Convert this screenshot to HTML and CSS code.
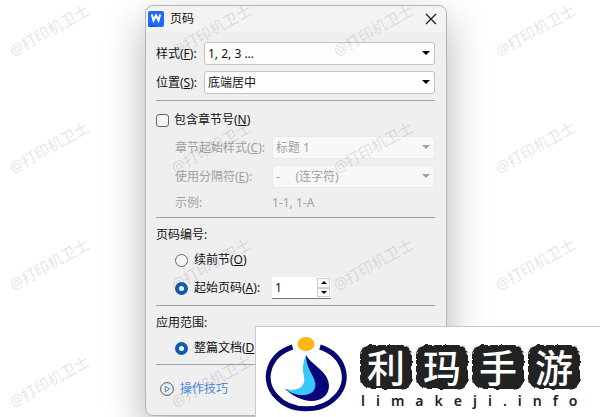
FILE: index.html
```html
<!DOCTYPE html>
<html lang="zh-CN">
<head>
    <meta charset="UTF-8">
    <meta name="viewport" content="width=device-width, initial-scale=1">
    <title>页码</title>
    <link rel="stylesheet" href="styles.css">
</head>
<body>
    <form class="dialog">
        <div class="titlebar">
            <svg class="app-icon" viewBox="0 0 16 16">
                <rect width="16" height="16" rx="2" fill="#1f6bf5"/>
                <path d="M0 14h9l-2 2H2a2 2 0 0 1-2-2z" fill="#1257dc"/>
                <path d="M3.800 3.500l1.700 6L8 4.500l2.500 5 1.700-6" fill="none" stroke="#fff" stroke-width="2"/>
            </svg>
            <span class="title">页码</span>
            <button type="button" class="close" aria-label="关闭">
                <svg viewBox="0 0 12 12"><path d="M1 1l10 10M11 1L1 11" stroke="#222" stroke-width="1.300"/></svg>
            </button>
        </div>

        <div class="content">
            <div class="row">
                <label for="style">样式(<u>F</u>):</label>
                <div class="select">
                    <select id="style"><option>1, 2, 3 ...</option></select>
                </div>
            </div>
            <div class="row">
                <label for="position">位置(<u>S</u>):</label>
                <div class="select">
                    <select id="position"><option>底端居中</option></select>
                </div>
            </div>

            <hr>

            <!-- 章节号 -->
            <div class="check">
                <input type="checkbox" id="chapter">
                <label for="chapter">包含章节号(<u>N</u>)</label>
            </div>
            <div class="row sub disabled">
                <label for="heading">章节起始样式(<u>C</u>):</label>
                <div class="select">
                    <select id="heading" disabled><option>标题 1</option></select>
                </div>
            </div>
            <div class="row sub disabled">
                <label for="separator">使用分隔符(<u>E</u>):</label>
                <div class="select">
                    <select id="separator" disabled><option>-&nbsp;&nbsp;&nbsp;&nbsp; (连字符)</option></select>
                </div>
            </div>
            <div class="row sub disabled sample">
                <span>示例:</span>
                <span>1-1, 1-A</span>
            </div>

            <hr>

            <!-- 页码编号 -->
            <div class="group">页码编号:</div>
            <div class="radio">
                <input type="radio" name="number" id="continue">
                <label for="continue">续前节(<u>O</u>)</label>
            </div>
            <div class="radio start">
                <input type="radio" name="number" id="start" checked>
                <label for="start">起始页码(<u>A</u>):</label>
                <div class="spinner">
                    <input type="number" value="1" aria-label="起始页码">
                    <div class="steps">
                        <button type="button" class="up" aria-label="增加"></button>
                        <button type="button" class="down" aria-label="减少"></button>
                    </div>
                </div>
            </div>

            <hr>

            <!-- 应用范围 -->
            <div class="group">应用范围:</div>
            <div class="radio range">
                <input type="radio" name="range" id="whole" checked>
                <label for="whole">整篇文档(<u>D</u>)</label>
            </div>

            <hr>

            <a href="#" class="tips">
                <svg viewBox="0 0 14 14">
                    <circle cx="7" cy="7" r="6.400" fill="none" stroke="#555" stroke-width="1"/>
                    <path d="M5.300 4.200v5.600L9.600 7z" fill="none" stroke="#3f83e0" stroke-width="1"/>
                </svg>
                <span>操作技巧</span>
            </a>
        </div>
    </form>

    <div class="watermark">
        <span>@打印机卫士</span><span>@打印机卫士</span><span>@打印机卫士</span><span>@打印机卫士</span>
        <span>@打印机卫士</span><span>@打印机卫士</span><span>@打印机卫士</span><span>@打印机卫士</span>
        <span>@打印机卫士</span><span>@打印机卫士</span><span>@打印机卫士</span><span>@打印机卫士</span>
        <span>@打印机卫士</span><span>@打印机卫士</span><span>@打印机卫士</span><span>@打印机卫士</span>
    </div>

    <div class="brand">
        <svg class="brand-logo" viewBox="0 0 90 84">
            <!-- 印章毛边 -->
            <filter id="rough">
                <feTurbulence type="fractalNoise" baseFrequency="0.15" numOctaves="2" seed="4"/>
                <feDisplacementMap in="SourceGraphic" scale="4" xChannelSelector="R" yChannelSelector="G"/>
            </filter>
            <path d="M32.500 17A38 32 0 1 0 60 17" fill="none" stroke="#06066e" stroke-width="5"/>
            <path d="M46 25C51 35 69 41 69 56C69 66 60 71 52 71C41 71 32 65 25 59C36 62 44 60 46 50z" fill="#06067a"/>
            <path d="M46 25C43 32 42 39 44 46C46 57 38 62 25 59C35 67 50 67 54 60C60 50 46 42 46 25z" fill="#38c6fb"/>
            <ellipse cx="46" cy="14" rx="8.500" ry="7" fill="#fdb913"/>
        </svg>
        <div class="brand-text">
            <div class="stamps"><span>利</span><span>玛</span><span>手</span><span>游</span></div>
            <div class="domain">limakeji.info</div>
        </div>
    </div>
</body>
</html>
```

FILE: styles.css
```css
*{
    box-sizing: border-box;
}

body{
    margin: 0;
    min-height: 100vh;
    position: relative;
    overflow: hidden;
    background-color: white;
    color: #111;
    font-family: "Noto Sans", "Noto Sans CJK SC", sans-serif;
    font-size: 12px;
    line-height: 18px;
}

input, select, button{
    margin: 0;
    color: inherit;
    font: inherit;
}

.dialog{
    width: 302px;
    margin: 5px 0 0 145px;
    border: 1px solid #b4b4b4;
    border-radius: 8px;
    background-color: #efefef;
    box-shadow: 0 16px 40px rgba(0, 0, 0, 0.3);
}

.titlebar{
    display: flex;
    align-items: center;
    gap: 6px;
    height: 26px;
    padding: 0 9px 0 2px;
    border-radius: 8px 8px 0 0;
    background-color: #f3f3f3;
}

.app-icon{
    width: 16px;
    height: 16px;
}

.title{
    flex: 1;
}

.close{
    display: flex;
    padding: 0;
    border: 0;
    background: none;
}

.close svg{
    width: 12px;
    height: 12px;
}

.content{
    padding: 10px 11px 14px 10px;
}

.row{
    display: grid;
    grid-template-columns: 48px 1fr;
    align-items: center;
    margin-bottom: 6px;
    white-space: nowrap;
}

.sub{
    grid-template-columns: 97px 1fr;
    padding-left: 19px;
}

.sample{
    margin: 0 0 5px;
}

.disabled{
    color: #a0a0a0;
}

.select{
    position: relative;
}

.select select{
    display: block;
    appearance: none;
    width: 100%;
    height: 23px;
    padding: 0 20px 0 3px;
    border: 1px solid #c4c4c4;
    border-radius: 3px;
    background-color: #fdfdfd;
}

.select select:disabled{
    border-color: #e8e8e8;
    background-color: #f8f8f8;
    color: #a0a0a0;
    opacity: 1;
}

.select::after{
    content: "";
    position: absolute;
    top: 9px;
    right: 5px;
    border: 4px solid transparent;
    border-top-color: black;
    border-bottom: 0;
}

.disabled .select::after{
    border-top-color: #a0a0a0;
}

hr{
    margin: 0;
    border: 0;
    border-top: 1px solid #a0a0a0;
}

.check{
    display: flex;
    align-items: center;
    gap: 5px;
    padding: 10px 0 7px;
}

.check input{
    appearance: none;
    width: 13px;
    height: 13px;
    border: 1px solid #666;
    border-radius: 3px;
    background-color: #f5f5f5;
}

.group{
    padding: 8px 0 3px;
}

.radio{
    display: flex;
    align-items: center;
    gap: 6px;
    height: 26px;
    padding-left: 19px;
}

.radio > input{
    appearance: none;
    width: 13px;
    height: 13px;
    border: 1px solid #666;
    border-radius: 50%;
    background-color: #f5f5f5;
}

.radio > input:checked{
    border: 4px solid #0b5cad;
    background-color: white;
}

.start{
    height: 30px;
    margin-bottom: 2px;
}

.range{
    margin-bottom: 3px;
}

.spinner{
    display: flex;
    width: 59px;
    height: 22px;
    margin-left: 6px;
    border-bottom: 1px solid #777;
    background-color: white;
}

.spinner input{
    appearance: textfield;
    flex: 1;
    min-width: 0;
    padding: 0 3px;
    border: 0;
    background: none;
}

.spinner input::-webkit-inner-spin-button{
    display: none;
}

.steps{
    display: flex;
    flex-direction: column;
    width: 14px;
    padding: 1px 1px 1px 0;
}

.steps button{
    display: flex;
    flex: 1;
    align-items: center;
    justify-content: center;
    padding: 0;
    border: 1px solid #d0d0d0;
    background-color: #fafafa;
}

.steps button::after{
    content: "";
    border: 3px solid transparent;
}

.steps .up::after{
    border-bottom-color: black;
    border-top: 0;
}

.steps .down::after{
    border-top-color: black;
    border-bottom: 0;
}

.tips{
    display: inline-flex;
    align-items: center;
    gap: 6px;
    margin: 15px 0 0 4px;
    color: #4a8ae0;
    text-decoration: none;
}

.tips svg{
    width: 14px;
    height: 14px;
}

/* 浮水印 */
.watermark{
    display: grid;
    grid-template-columns: repeat(4, 98px);
    grid-auto-rows: 60px;
    gap: 57px 64px;
    position: absolute;
    top: 0;
    left: 0;
    color: rgba(110, 110, 130, 0.2);
    font-size: 15px;
    pointer-events: none;
}

.watermark span{
    display: flex;
    align-items: center;
    justify-content: center;
    transform: rotate(-29deg);
}

/* 右下角標誌 */
.brand{
    display: flex;
    gap: 10px;
    position: absolute;
    right: 0;
    bottom: 0;
    width: 345px;
    height: 91px;
    padding: 3px 0 0 4px;
    border-top: 1px solid #c8c8d6;
    border-left: 1px solid #c8c8d6;
    background-color: white;
}

.brand-logo{
    width: 90px;
    height: 84px;
}

.brand-text{
    padding-top: 15px;
}

.stamps{
    display: flex;
    gap: 4px;
}

.stamps span{
    display: flex;
    align-items: center;
    justify-content: center;
    position: relative;
    width: 52px;
    height: 44px;
    color: white;
    font-size: 38px;
    font-weight: 500;
    line-height: 44px;
    z-index: 0;
}

.stamps span::before{
    content: "";
    position: absolute;
    inset: 0;
    border-radius: 10px;
    background-color: #222;
    filter: url(#rough);
    z-index: -1;
}

.domain{
    padding: 3px 0 0 1px;
    color: #222;
    font-size: 14px;
    font-weight: 600;
    letter-spacing: 11px;
    line-height: 18px;
}
```
